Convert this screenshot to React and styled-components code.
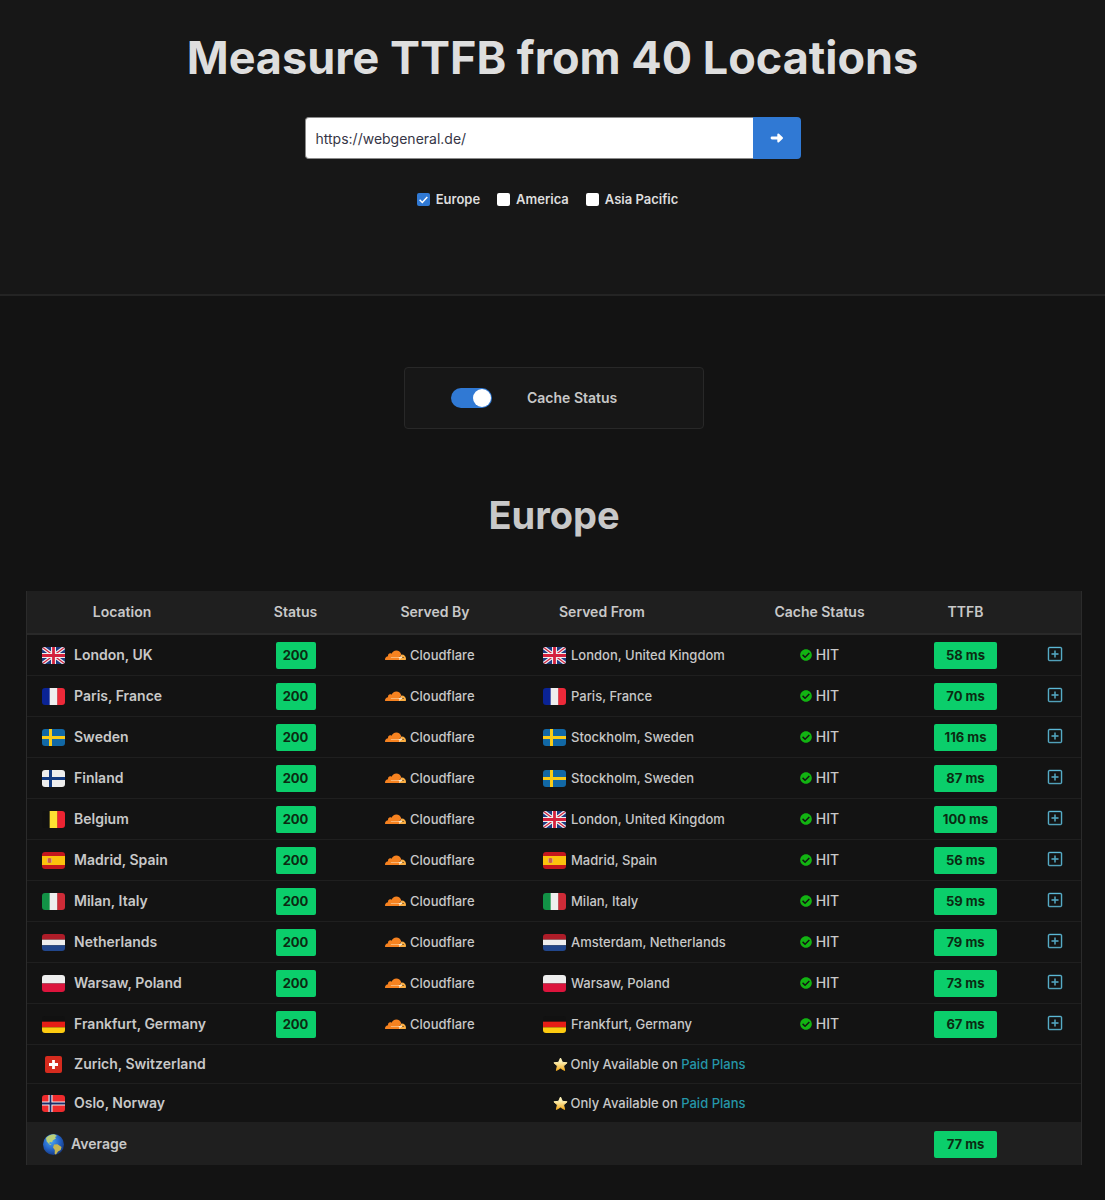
import { useState } from "react";
import styled, { createGlobalStyle } from "styled-components";
import { BsPlusSquare } from "react-icons/bs";
import { FaCheckCircle } from "react-icons/fa";

const GlobalStyle = createGlobalStyle`
  * {
    box-sizing: border-box;
  }
  body {
    margin: 0;
    background: #131313;
    color: #c8c8c8;
    font-family: Inter, "Liberation Sans", sans-serif;
    font-size: 14px;
    line-height: 20px;
  }
`;

const Hero = styled.header`
  display: flex;
  flex-direction: column;
  align-items: center;
  padding: 30px 20px 85px;
  background: #171717;
  border-bottom: 2px solid #242424;
`;
const Title = styled.h1`
  margin: 0;
  font-size: 45px;
  font-weight: 700;
  line-height: 56px;
  color: #dedede;
  text-align: center;
`;
const SearchForm = styled.form`
  display: flex;
  width: 100%;
  max-width: 496px;
  margin: 31px 0 30px;
`;
const UrlInput = styled.input`
  flex: 1;
  min-width: 0;
  height: 42px;
  padding: 0 10px;
  border: 1px solid #8a8a8a;
  border-right: none;
  border-radius: 4px 0 0 4px;
  background: #fff;
  color: #363646;
  font: inherit;
`;
const GoButton = styled.button`
  display: flex;
  align-items: center;
  justify-content: center;
  width: 48px;
  padding: 0;
  border: none;
  border-radius: 0 4px 4px 0;
  background: #3079d4;
  cursor: pointer;
`;
const Regions = styled.div`
  display: flex;
  flex-wrap: wrap;
  gap: 17px;
  padding-right: 10px;
`;
const RegionLabel = styled.label`
  display: flex;
  align-items: center;
  gap: 6px;
  font-size: 13px;
  font-weight: 600;
  color: #dedede;
`;
const CheckBox = styled.input`
  appearance: none;
  width: 13px;
  height: 13px;
  margin: 0;
  border-radius: 2px;
  background: #fff;

  &:checked {
    background: #3079d4
      url("data:image/svg+xml,%3Csvg xmlns='http://www.w3.org/2000/svg' viewBox='0 0 13 13'%3E%3Cpath d='M2.6 6.8l2.7 2.7 5-5.6' fill='none' stroke='white' stroke-width='1.5'/%3E%3C/svg%3E");
  }
`;

const Results = styled.main`
  padding: 71px 23px 36px 26px;
`;
const ToggleCard = styled.label`
  display: flex;
  align-items: center;
  gap: 35px;
  width: 300px;
  height: 62px;
  margin: 0 auto;
  padding-left: 46px;
  border: 1px solid #282828;
  border-radius: 4px;
  background: #171717;
  font-weight: 600;
`;
const Toggle = styled.input`
  appearance: none;
  display: flex;
  width: 41px;
  height: 20px;
  margin: 0;
  padding: 1px;
  border-radius: 10px;
  background: #555;

  &::before {
    content: "";
    width: 18px;
    height: 18px;
    border-radius: 50%;
    background: #fff;
  }
  &:checked {
    justify-content: flex-end;
    background: #3079d4;
  }
`;
const RegionTitle = styled.h2`
  margin: 63px 0 53px;
  font-size: 38px;
  font-weight: 700;
  line-height: 46px;
  text-align: center;
`;

const Table = styled.table`
  width: 100%;
  border-spacing: 0;
  border: 0 solid #2b2b2b;
  border-width: 0 1px;
  table-layout: fixed;
  white-space: nowrap;
`;
const Col = styled.col`
  width: ${(props) => props.$width}px;
`;
const Th = styled.th`
  height: 44px;
  padding: 0 0 0 ${(props) => props.$indent || 0}px;
  border-bottom: 2px solid #292929;
  background: #1f1f1f;
  font-weight: 600;
  text-align: ${(props) => (props.$indent ? "left" : "center")};
`;
const Td = styled.td`
  height: ${(props) => (props.$short ? 39 : 41)}px;
  padding: 0 0 0 ${(props) => props.$indent || 0}px;
  border-bottom: 1px solid #1f1f1f;
  text-align: ${(props) => (props.$indent ? "left" : "center")};
`;
const FootTd = styled(Td)`
  height: 42px;
  border: none;
  background: #1f1f1f;
`;
const Place = styled.div`
  display: flex;
  align-items: center;
  gap: ${(props) => props.$gap}px;
  font-size: ${(props) => (props.$bold ? 14 : 13)}px;
  font-weight: ${(props) => (props.$bold ? 600 : 500)};
`;
const Inline = styled.div`
  display: flex;
  align-items: center;
  justify-content: center;
  gap: ${(props) => props.$gap}px;
  font-size: ${(props) => (props.$small ? 13 : 14)}px;
  font-weight: 500;
`;
const Badge = styled.span`
  display: inline-block;
  width: ${(props) => props.$width}px;
  border-radius: 2px;
  background: #0bce6b;
  color: #0b2a12;
  font-size: 13px;
  font-weight: 700;
  line-height: 27px;
  vertical-align: middle;
`;
const Details = styled.button`
  display: inline-flex;
  padding: 0 0 4px;
  border: none;
  background: none;
  color: #5cb8d6;
  vertical-align: middle;
  cursor: pointer;
`;
const PlusIcon = styled(BsPlusSquare)`
  stroke-width: 0.5;
  overflow: visible;
`;
const PlanLink = styled.a`
  color: #2596a8;
  text-decoration: none;
`;
const HitIcon = styled(FaCheckCircle)`
  color: #12b312;
`;
const FlagSvg = styled.svg`
  flex: none;
  width: 23px;
  height: 17px;
  border-radius: 3px;
`;

// flags are drawn on a 23x17 grid
function Bars({ colors, vertical }) {
  return colors.map((color, i) =>
    vertical ? (
      <rect key={i} x={(23 / colors.length) * i} width="8" height="17" fill={color} />
    ) : (
      <rect
        key={i}
        y={(17 / colors.length) * i}
        width="23"
        height={17 / colors.length}
        fill={color}
      />
    )
  );
}

function Cross({ ground, outer, inner }) {
  return (
    <>
      <rect width="23" height="17" fill={ground} />
      <path d="M8.5 0V17M0 8.5H23" stroke={outer} strokeWidth={inner ? 4 : 3} />
      {inner && <path d="M8.5 0V17M0 8.5H23" stroke={inner} strokeWidth="1.8" />}
    </>
  );
}

const flags = {
  uk: (
    <>
      <rect width="23" height="17" fill="#1d3a80" />
      <path d="M0 0L23 17M23 0L0 17" stroke="#eee" strokeWidth="3.6" />
      <path d="M0 0L23 17M23 0L0 17" stroke="#d4213d" strokeWidth="1.2" />
      <path d="M11.5 0V17M0 8.5H23" stroke="#eee" strokeWidth="5" />
      <path d="M11.5 0V17M0 8.5H23" stroke="#d4213d" strokeWidth="2.8" />
    </>
  ),
  france: <Bars vertical colors={["#0a2395", "#eee", "#ed2939"]} />,
  sweden: <Cross ground="#1268a5" outer="#f9cb17" />,
  finland: <Cross ground="#eee" outer="#123a80" />,
  belgium: <Bars vertical colors={["#111", "#fde032", "#ed2432"]} />,
  spain: (
    <>
      <rect width="23" height="17" fill="#c5161d" />
      <rect y="4" width="23" height="9" fill="#fcc10d" />
      <path d="M5 6.5h1v4h-1zM9 6.5h1v4h-1z" fill="#d9a27a" />
      <rect x="6" y="6" width="3" height="5" rx="1" fill="#cf5a4a" />
    </>
  ),
  italy: <Bars vertical colors={["#129246", "#eee", "#ce2b37"]} />,
  netherlands: <Bars colors={["#ae1c28", "#eee", "#21468b"]} />,
  poland: <Bars colors={["#eee", "#dc143c"]} />,
  germany: <Bars colors={["#111", "#e61d16", "#fdcb10"]} />,
  switzerland: (
    <>
      <rect x="3" width="17" height="17" rx="2" fill="#d52b1e" />
      <path d="M11.5 4V13M7 8.5H16" stroke="#fff" strokeWidth="2.8" />
    </>
  ),
  norway: <Cross ground="#ef2b2d" outer="#eee" inner="#1b2b68" />,
};

function Flag({ name }) {
  return (
    <FlagSvg viewBox="0 0 23 17" preserveAspectRatio="none" aria-hidden="true">
      {flags[name]}
    </FlagSvg>
  );
}

function Globe() {
  return (
    <svg width="23" height="23" viewBox="0 0 23 23" aria-hidden="true">
      <defs>
        <radialGradient id="sea" cx="0.4" cy="0.35" r="0.65">
          <stop offset="0" stopColor="#4aa3f0" />
          <stop offset="0.6" stopColor="#2464c8" />
          <stop offset="1" stopColor="#173c86" />
        </radialGradient>
      </defs>
      <circle cx="11.5" cy="11.5" r="10.5" fill="url(#sea)" />
      <path
        d="M4 5Q8 .8 13 1.4l2 1.7-2 1 1 1.5-3 1.7-1 2-2-.4-1 1.3 2.5 1.3L8 12 4.700 8.500z"
        fill="#b9cf7a"
      />
      <path
        d="M12 11.500l3.500-.3 4 2.800-.8 3-2.700 1.500-2 3-1.300-.5.1-4-1.800-2.500z"
        fill="#c6b653"
      />
    </svg>
  );
}

function Star() {
  return (
    <svg width="15" height="15" viewBox="0 0 15 15" aria-hidden="true">
      <defs>
        <linearGradient id="gold" x2="0" y2="1">
          <stop offset="0.3" stopColor="#fff3b8" />
          <stop offset="1" stopColor="#f3ab1c" />
        </linearGradient>
      </defs>
      <path
        d="M7.500 1l1.900 4.300 4.700.5-3.500 3.100 1 4.600-4.100-2.400-4.100 2.400 1-4.600-3.500-3.100 4.700-.5z"
        fill="url(#gold)"
        stroke="url(#gold)"
        strokeLinejoin="round"
      />
    </svg>
  );
}

function Cloud() {
  return (
    <svg width="21" height="12" viewBox="0 5.800 24 12" aria-hidden="true">
      <path d="M6 14H17.200L18.800 11.300L20 14L18 17.400H15.500V15.800H6z" fill="#ffe6c4" />
      <path
        d="M16.5088 16.8447c.1475-.5068.0908-.9707-.1553-1.3154-.2246-.3164-.6045-.499-1.0615-.5205l-8.6592-.1123a.1559.1559 0 0 1-.1333-.0713c-.0283-.042-.0351-.0986-.021-.1553.0278-.084.1123-.1484.2036-.1562l8.7359-.1123c1.0351-.0489 2.1601-.8868 2.5537-1.9136l.499-1.3013c.0215-.0561.0293-.1128.0147-.168-.5625-2.5463-2.835-4.4453-5.5499-4.4453-2.5039 0-4.6284 1.6177-5.3876 3.8614-.4927-.3658-1.1187-.5625-1.794-.499-1.2026.119-2.1665 1.083-2.2861 2.2856-.0283.31-.0069.6128.0635.894C1.5683 13.171 0 14.7754 0 16.752c0 .1748.0142.3515.0352.5273.0141.083.0844.1475.1689.1475h15.9814c.0909 0 .1758-.0645.2032-.1553l.12-.4268z"
        fill="#f68220"
      />
      <path
        d="M19.2656 11.2813c-.0771 0-.1611 0-.2383.0112-.0566 0-.1054.0415-.127.0976l-.3378 1.1744c-.1475.5068-.0918.9707.1543 1.3164.2256.3164.6055.498 1.0625.5195l1.8437.1133c.0557 0 .1055.0263.1329.0703.0283.043.0351.1074.0214.1562-.0283.084-.1132.1485-.204.1553l-1.921.1123c-1.041.0488-2.1582.8867-2.5527 1.914l-.1406.3585c-.0283.0713.0215.1416.0986.1416h6.5977c.0771 0 .1474-.0489.169-.126.1122-.4082.1757-.837.1757-1.2803 0-2.6025-2.125-4.727-4.7344-4.727"
        fill="#fbad41"
      />
    </svg>
  );
}

const rows = [
  ["uk", "London, UK", "uk", "London, United Kingdom", 58],
  ["france", "Paris, France", "france", "Paris, France", 70],
  ["sweden", "Sweden", "sweden", "Stockholm, Sweden", 116],
  ["finland", "Finland", "sweden", "Stockholm, Sweden", 87],
  ["belgium", "Belgium", "uk", "London, United Kingdom", 100],
  ["spain", "Madrid, Spain", "spain", "Madrid, Spain", 56],
  ["italy", "Milan, Italy", "italy", "Milan, Italy", 59],
  ["netherlands", "Netherlands", "netherlands", "Amsterdam, Netherlands", 79],
  ["poland", "Warsaw, Poland", "poland", "Warsaw, Poland", 73],
  ["germany", "Frankfurt, Germany", "germany", "Frankfurt, Germany", 67],
];
const paidRows = [
  ["switzerland", "Zurich, Switzerland"],
  ["norway", "Oslo, Norway"],
];
const columns = [190, 157, 122, 241, 165, 127, 52];

function App() {
  const [url, setUrl] = useState("https://webgeneral.de/");

  return (
    <>
      <GlobalStyle />
      <Hero>
        <Title>Measure TTFB from 40 Locations</Title>
        <SearchForm onSubmit={(e) => e.preventDefault()}>
          <UrlInput
            aria-label="URL"
            value={url}
            onChange={(e) => setUrl(e.target.value)}
          />
          <GoButton aria-label="Measure">
            <svg width="14" height="12" viewBox="0 0 14 12" aria-hidden="true">
              <path
                d="M2 6H10"
                stroke="#fff"
                strokeWidth="2.800"
                strokeLinecap="round"
              />
              <path
                d="M8.300 2.500L12 6L8.300 9.500z"
                fill="#fff"
                stroke="#fff"
                strokeWidth="2"
                strokeLinejoin="round"
              />
            </svg>
          </GoButton>
        </SearchForm>
        <Regions>
          <RegionLabel>
            <CheckBox type="checkbox" defaultChecked />
            Europe
          </RegionLabel>
          <RegionLabel>
            <CheckBox type="checkbox" />
            America
          </RegionLabel>
          <RegionLabel>
            <CheckBox type="checkbox" />
            Asia Pacific
          </RegionLabel>
        </Regions>
      </Hero>

      <Results>
        <ToggleCard>
          <Toggle type="checkbox" role="switch" defaultChecked />
          Cache Status
        </ToggleCard>
        <RegionTitle>Europe</RegionTitle>

        <Table>
          <colgroup>
            {columns.map((width, i) => (
              <Col key={i} $width={width} />
            ))}
          </colgroup>
          <thead>
            <tr>
              <Th>Location</Th>
              <Th>Status</Th>
              <Th>Served By</Th>
              <Th $indent={63}>Served From</Th>
              <Th>Cache Status</Th>
              <Th>TTFB</Th>
              <Th aria-label="Details" />
            </tr>
          </thead>
          <tbody>
            {rows.map(([flag, location, fromFlag, from, ms]) => (
              <tr key={location}>
                <Td $indent={15}>
                  <Place $gap={9} $bold>
                    <Flag name={flag} />
                    {location}
                  </Place>
                </Td>
                <Td>
                  <Badge $width={40}>200</Badge>
                </Td>
                <Td $indent={11}>
                  <Place $gap={4}>
                    <Cloud />
                    Cloudflare
                  </Place>
                </Td>
                <Td $indent={47}>
                  <Place $gap={5}>
                    <Flag name={fromFlag} />
                    {from}
                  </Place>
                </Td>
                <Td>
                  <Inline $gap={4}>
                    <HitIcon size={12} />
                    HIT
                  </Inline>
                </Td>
                <Td>
                  <Badge $width={63}>{ms} ms</Badge>
                </Td>
                <Td>
                  <Details aria-label={`Details for ${location}`}>
                    <PlusIcon size={14} />
                  </Details>
                </Td>
              </tr>
            ))}
            {paidRows.map(([flag, location]) => (
              <tr key={location}>
                <Td $indent={15} $short>
                  <Place $gap={9} $bold>
                    <Flag name={flag} />
                    {location}
                  </Place>
                </Td>
                <Td colSpan={6} $short>
                  <Inline $gap={3} $small>
                    <Star />
                    <span>
                      Only Available on <PlanLink href="#plans">Paid Plans</PlanLink>
                    </span>
                  </Inline>
                </Td>
              </tr>
            ))}
          </tbody>
          <tfoot>
            <tr>
              <FootTd $indent={15} colSpan={5}>
                <Place $gap={6} $bold>
                  <Globe />
                  Average
                </Place>
              </FootTd>
              <FootTd>
                <Badge $width={63}>77 ms</Badge>
              </FootTd>
              <FootTd />
            </tr>
          </tfoot>
        </Table>
      </Results>
    </>
  );
}

export default App;
